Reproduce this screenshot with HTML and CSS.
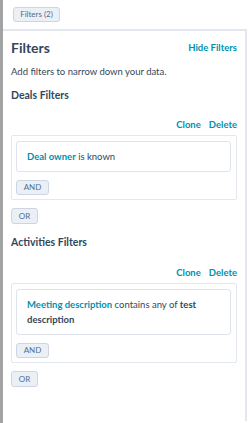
FILE: index.html
```html
<!DOCTYPE html>
<html lang="en">

<head>
    <meta charset="UTF-8">
    <meta name="viewport" content="width=device-width, initial-scale=1.0">
    <title>Filters</title>
    <link rel="stylesheet" href="styles.css">
</head>

<body>
    <div class="page">
        <div class="topbar">
            <button class="btn">Filters (2)</button>
        </div>

        <div class="panel">
            <div class="panel-header">
                <h1>Filters</h1>
                <a class="link" href="#">Hide Filters</a>
            </div>
            <p class="hint">Add filters to narrow down your data.</p>

            <section class="group">
                <h2>Deals Filters</h2>
                <div class="group-actions">
                    <a class="link" href="#">Clone</a>
                    <a class="link" href="#">Delete</a>
                </div>
                <div class="card">
                    <div class="rule">
                        <a class="prop" href="#">Deal owner</a> is known
                    </div>
                    <button class="btn">AND</button>
                </div>
                <button class="btn btn-or">OR</button>
            </section>

            <section class="group">
                <h2>Activities Filters</h2>
                <div class="group-actions">
                    <a class="link" href="#">Clone</a>
                    <a class="link" href="#">Delete</a>
                </div>
                <div class="card">
                    <div class="rule">
                        <a class="prop" href="#">Meeting description</a> contains any of <b>test description</b>
                    </div>
                    <button class="btn">AND</button>
                </div>
                <button class="btn btn-or">OR</button>
            </section>
        </div>
    </div>
</body>

</html>
```

FILE: styles.css
```css
body {
    margin: 0;
    font-family: Lato, 'Liberation Sans', sans-serif;
    color: #33475b;
    background-color: #fff;
}

.page {
    min-height: 423px;
    border-left: 3px solid #a3a3a3;
    box-sizing: border-box;
}

.topbar {
    height: 29px;
    padding: 7px 0 0 10px;
    box-sizing: border-box;
}

.btn {
    display: block;
    height: 15px;
    padding: 0 6px;
    font-family: inherit;
    font-size: 8px;
    line-height: 13px;
    color: #506e91;
    background-color: #eaf0f6;
    border: 1px solid #cbd6e2;
    border-radius: 3px;
}

.topbar .btn {
    width: 47px;
    padding: 0;
}

.panel {
    margin-right: 3px;
    padding: 6px 8px 20px 8px;
    border-top: 2px solid #e3e8ee;
    border-right: 2px solid #e3e8ee;
    min-height: 392px;
    box-sizing: border-box;
}

.panel-header {
    display: flex;
    justify-content: space-between;
    align-items: center;
    height: 20px;
}

h1 {
    margin: 0;
    font-size: 14px;
    font-weight: 700;
}

.link {
    color: #0091ae;
    font-size: 9.5px;
    font-weight: 700;
    text-decoration: none;
}

.hint {
    margin: 8px 0 0;
    font-size: 9.5px;
    line-height: 14px;
}

.group h2 {
    margin: 9px 0 0;
    font-size: 10.5px;
    line-height: 14px;
    font-weight: 700;
}

.group + .group h2 {
    margin-top: 11px;
}

.group-actions {
    display: flex;
    justify-content: flex-end;
    gap: 8px;
    margin-top: 16px;
    line-height: 14px;
}

.group + .group .group-actions {
    margin-top: 17px;
}

.card {
    margin-top: 3px;
    padding: 5px 5px 4px 4px;
    border: 1px solid #e3e8ee;
    border-radius: 2px;
}

.rule {
    padding: 7px 10px 7px 10px;
    font-size: 9.5px;
    line-height: 15px;
    border: 1px solid #dfe3eb;
    border-radius: 3px;
}

.rule b {
    font-weight: 700;
}

.prop {
    color: #0091ae;
    font-weight: 700;
    text-decoration: none;
}

.card .btn {
    margin-top: 8px;
    width: 33px;
    padding: 0;
}

.btn-or {
    margin-top: 8px;
    width: 27px;
    height: 16px;
    padding: 0;
}
```
